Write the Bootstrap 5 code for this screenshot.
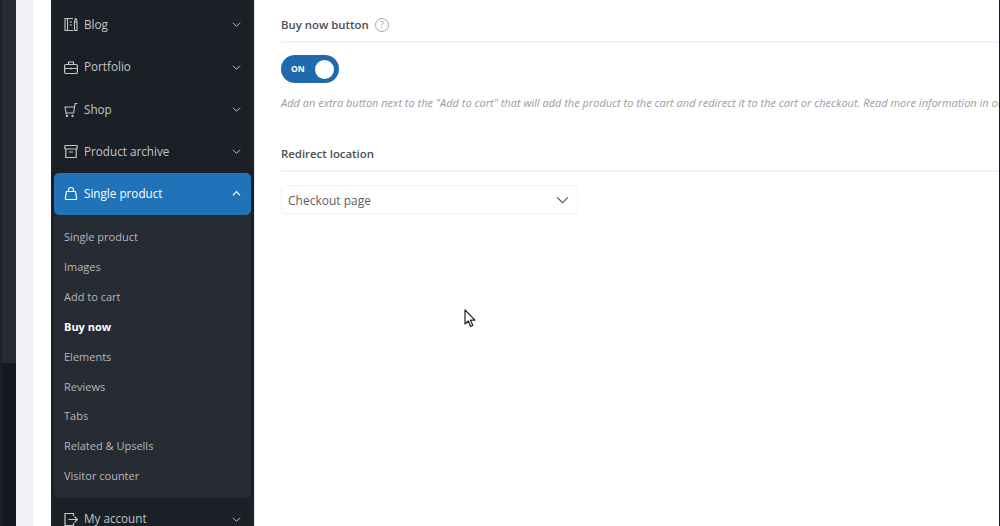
<!DOCTYPE html>
<html lang="en">
<head>
    <meta charset="UTF-8">
    <title>Buy now settings</title>
    <link href="https://cdn.jsdelivr.net/npm/bootstrap@5.3.0/dist/css/bootstrap.min.css" rel="stylesheet">
    <style>
        html, body { height: 526px; overflow: hidden; }
        body { font-family: "Open Sans", "Liberation Sans", sans-serif; background: #fff; }
        .page-wrap { height: 526px; }
        .edge-bar { width: 16px; flex: none; border-left: 2px solid #1d2026; background: linear-gradient(#272a31 0 363px, #15181e 363px); }
        .edge-gap { width: 17px; flex: none; background: #f0f0f5; }
        .edge-white { width: 18px; flex: none; background: #fff; }
        .side-menu { width: 203px; flex: none; background: #1b1f26; height: 526px; padding: 0 3px; overflow: hidden; }
        .side-item { height: 42.3px; padding: 0 10px 0 10px; color: #c3c6cb; font-size: 11.7px; }
        .side-item svg.item-icon { width: 14px; height: 15px; margin-right: 6px; flex: none; }
        .side-item svg.item-chev { width: 9px; height: 9px; margin-left: auto; flex: none; }
        .side-first { margin-top: 3.6px; }
        .side-active { background: #2173b9; color: #fff; border-radius: 5px; }
        .side-sub { background: #272c34; border-radius: 0 0 6px 6px; padding: 7px 0 7px 10px; }
        .side-sub div { height: 29.9px; line-height: 29.9px; font-size: 11px; color: #b4b7bc; }
        .side-sub .sub-on { color: #fff; font-weight: 700; }
        .main-pane { min-width: 0; overflow: hidden; padding-left: 26px; color: #3f434a; border-left: 1px solid #e8e8ee; }
        .opt-title { font-size: 11.4px; font-weight: 600; color: #4a4e55; }
        .opt-line { border-bottom: 2px solid #f2f2f6; }
        .first-line { height: 43px; padding-top: 8px; }
        .second-line { height: 39px; margin-top: 22px; padding-top: 4px; }
        .help-dot { width: 14px; height: 14px; border: 1px solid #a6a9ae; border-radius: 50%; font-size: 9px; color: #94979c; line-height: 12px; text-align: center; margin-left: -2px; }
        .on-toggle { width: 58px; height: 28px; background: #1f6aad; border-radius: 14px; padding: 0 5px 0 10px; margin-top: 12px; }
        .on-toggle span { color: #fff; font-size: 8.5px; font-weight: 700; }
        .on-toggle i { display: block; width: 19px; height: 19px; background: #fff; border-radius: 50%; }
        .opt-hint { font-size: 11px; font-style: italic; color: #9a9da2; white-space: nowrap; margin-top: 12px; line-height: 16px; }
        .page-select { width: 297px; height: 29px; border: 1px solid #f3f3f6; border-radius: 3px; padding: 0 8px 0 6px; margin-top: 13px; font-size: 12px; color: #5b5f65; box-shadow: 0 1px 2px rgba(0,0,0,.03); }
        .page-select span { display: block; height: 16px; line-height: 18px; overflow: hidden; }
        .mouse-ptr { position: absolute; left: 464px; top: 309px; width: 12px; height: 19px; }
        .right-edge { position: absolute; right: 0; top: 0; width: 1px; height: 526px; background: #1b1d22; }
    </style>
</head>
<body>
    <div class="page-wrap d-flex position-relative">
        <div class="edge-bar"></div>
        <div class="edge-gap"></div>
        <div class="edge-white"></div>

        <!-- side menu -->
        <div class="side-menu">
            <div class="side-item side-first d-flex align-items-center">
                <svg class="item-icon" viewBox="0 0 14 15" fill="none" stroke="currentColor" stroke-width="1.1"><path d="M9 1.500H1v12h8M3.500 1.500v12M5.500 5H8M5.500 8H8"/><path d="M10.500 5c0-1.500.7-3 1.200-3.500.5.500 1.300 2 1.300 3.500v8.500h-2.500zM10.500 5H13"/></svg>
                <span>Blog</span>
                <svg class="item-chev" viewBox="0 0 10 10" fill="none" stroke="currentColor" stroke-width="1.1"><path d="M1 3l4 4 4-4"/></svg>
            </div>
            <div class="side-item d-flex align-items-center">
                <svg class="item-icon" viewBox="0 0 14 15" fill="none" stroke="currentColor" stroke-width="1.2"><rect x=".6" y="4.500" width="12.800" height="9" rx="1.200"/><path d="M4.500 4.500V2h5v2.500M.6 8.500h12.800M7 7.500v2"/></svg>
                <span>Portfolio</span>
                <svg class="item-chev" viewBox="0 0 10 10" fill="none" stroke="currentColor" stroke-width="1.1"><path d="M1 3l4 4 4-4"/></svg>
            </div>
            <div class="side-item d-flex align-items-center">
                <svg class="item-icon" viewBox="0 0 14 15" fill="none" stroke="currentColor" stroke-width="1.1"><path d="M.6 5h9.800M1 5l1.200 6h7.400l1.500-9.500h2.300M2.200 11l-.4 1.500"/><circle cx="3" cy="14" r=".6"/><circle cx="8.500" cy="14" r=".6"/></svg>
                <span>Shop</span>
                <svg class="item-chev" viewBox="0 0 10 10" fill="none" stroke="currentColor" stroke-width="1.1"><path d="M1 3l4 4 4-4"/></svg>
            </div>
            <div class="side-item d-flex align-items-center">
                <svg class="item-icon" viewBox="0 0 14 15" fill="none" stroke="currentColor" stroke-width="1.2"><rect x=".8" y="1.500" width="12.400" height="3.500" rx=".8"/><path d="M1.800 5v8.500h10.400V5M5 8h4"/></svg>
                <span>Product archive</span>
                <svg class="item-chev" viewBox="0 0 10 10" fill="none" stroke="currentColor" stroke-width="1.1"><path d="M1 3l4 4 4-4"/></svg>
            </div>
            <div class="side-item side-active d-flex align-items-center">
                <svg class="item-icon" viewBox="0 0 14 15" fill="none" stroke="currentColor" stroke-width="1.2"><path d="M2.500 5.500h9l1.200 6.800a1.200 1.200 0 01-1.200 1.200h-9a1.200 1.200 0 01-1.200-1.200zM4.500 5.500V4a2.500 2.500 0 015 0v1.500"/></svg>
                <span>Single product</span>
                <svg class="item-chev" viewBox="0 0 10 10" fill="none" stroke="currentColor" stroke-width="1.3"><path d="M1 7l4-4 4 4"/></svg>
            </div>
            <div class="side-sub">
                <div>Single product</div>
                <div>Images</div>
                <div>Add to cart</div>
                <div class="sub-on">Buy now</div>
                <div>Elements</div>
                <div>Reviews</div>
                <div>Tabs</div>
                <div>Related &amp; Upsells</div>
                <div>Visitor counter</div>
            </div>
            <div class="side-item d-flex align-items-center">
                <svg class="item-icon" viewBox="0 0 14 15" fill="none" stroke="currentColor" stroke-width="1.2"><path d="M9.500 4V1.500H1v12h8.500V11M4.500 7.500h9M10.500 4.500l3 3-3 3"/></svg>
                <span>My account</span>
                <svg class="item-chev" viewBox="0 0 10 10" fill="none" stroke="currentColor" stroke-width="1.1"><path d="M1 3l4 4 4-4"/></svg>
            </div>
        </div>

        <!-- main settings -->
        <div class="main-pane flex-grow-1">
            <div class="opt-line first-line d-flex align-items-center gap-2">
                <span class="opt-title">Buy now button</span>
                <span class="help-dot">?</span>
            </div>
            <div class="on-toggle d-flex align-items-center justify-content-between">
                <span>ON</span><i></i>
            </div>
            <div class="opt-hint">Add an extra button next to the "Add to cart" that will add the product to the cart and redirect it to the cart or checkout. Read more information in our documentation</div>
            <div class="opt-line second-line d-flex align-items-center">
                <span class="opt-title">Redirect location</span>
            </div>
            <div class="page-select d-flex align-items-center justify-content-between">
                <span>Checkout page</span>
                <svg width="13" height="13" viewBox="0 0 12 12" fill="none" stroke="#55595f" stroke-width="1.1"><path d="M1 4l5 5 5-5"/></svg>
            </div>
        </div>

        <svg class="mouse-ptr" viewBox="0 0 12 19"><path d="M1 1v14l3.300-3 2.200 5.500 2.300-1-2.300-5.300H11z" fill="#fff" stroke="#222" stroke-width="1.200" stroke-linejoin="round"/></svg>
        <div class="right-edge"></div>
    </div>
    <script src="https://cdn.jsdelivr.net/npm/bootstrap@5.3.0/dist/js/bootstrap.bundle.min.js"></script>
</body>
</html>
